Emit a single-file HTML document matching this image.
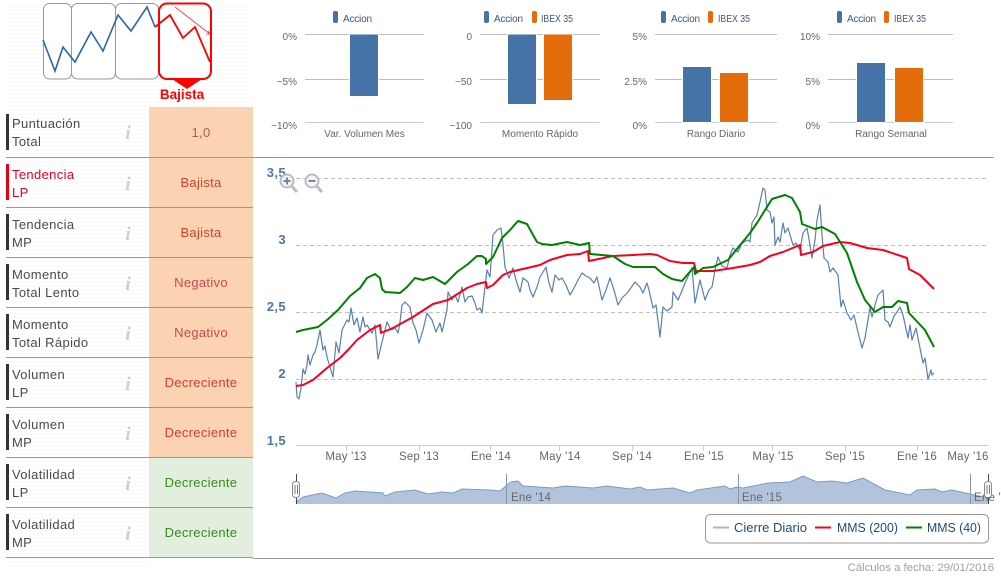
<!DOCTYPE html>
<html lang="es"><head><meta charset="utf-8"><title>Análisis</title>
<style>
html,body{margin:0;padding:0;background:#fff;width:1001px;height:582px;overflow:hidden}
svg{display:block}
text{font-family:"Liberation Sans",sans-serif}
.l{font-size:13px;fill:#444c55;letter-spacing:.35px}
.v{font-size:13px;text-anchor:middle;letter-spacing:.3px}
.r{fill:#c8442e}.g{fill:#3a8a1a}
.i{font-family:"Liberation Serif",serif;font-style:italic;font-weight:bold;font-size:19px;fill:#cfcfcf;text-anchor:middle}
.t{font-size:10px;fill:#666}
.e{text-anchor:end}.m{text-anchor:middle}
.y{font-size:13px;font-weight:bold;fill:#4d75a8;text-anchor:end;letter-spacing:.4px}
.x{font-size:11.5px;fill:#666;text-anchor:middle;letter-spacing:.2px}
.lg{font-size:13px;fill:#274b6d}
</style></head><body>
<svg width="1001" height="582" viewBox="0 0 1001 582" xmlns="http://www.w3.org/2000/svg">
<defs>
<pattern id="d" width="4" height="4" patternUnits="userSpaceOnUse"><rect x="1" y="1" width="2" height="2" fill="#f9f9f9"/></pattern>
<clipPath id="c"><rect x="254" y="470" width="747" height="40"/></clipPath>
</defs>
<rect x="6" y="3" width="244" height="104" fill="url(#d)"/>
<rect x="6" y="107" width="143" height="463" fill="url(#d)"/>

<!-- thumbnail -->
<g fill="#fff" stroke="#999" stroke-width="1">
<rect x="43.5" y="3.5" width="28" height="75.5" rx="6"/>
<rect x="71.5" y="3.5" width="44" height="75.5" rx="6"/>
<rect x="115.5" y="3.5" width="43" height="75.5" rx="6"/>
</g>
<rect x="159" y="3.5" width="52" height="75.5" rx="8" fill="#fff" stroke="#f00" stroke-width="2"/>
<path d="M172 79H202L187 89Z" fill="#f00"/>
<path d="M43 40L55 71L63 47L75 62L91 32L103 51L118 15L131 31L147 7L155 27" fill="none" stroke="#2a66a8" stroke-width="1.6"/>
<path d="M155 27L170 15L183 38L195 27L210 62" fill="none" stroke="#f00" stroke-width="1.8"/>
<path d="M175 7L210 34M210 34L206 34M210 34L208 31" fill="none" stroke="#f33" stroke-width=".8"/>
<text x="182" y="99" class="m" font-weight="bold" fill="#f00" style="font-size:13.5px">Bajista</text>

<!-- coloured cells -->
<rect x="149" y="107" width="104" height="350" fill="#fbd3b2"/>
<rect x="149" y="457" width="104" height="100" fill="#e2efdf"/>

<!-- row separators -->
<g stroke="#999" stroke-width="1">
<path d="M6 157.5H994M6 207.5H253M6 257.5H253M6 307.5H253M6 357.5H253M6 407.5H253M6 457.5H253M6 507.5H253M6 557.5H253M253 558.5H994"/>
</g>

<!-- left bars -->
<g fill="#333">
<rect x="6" y="114" width="3" height="36"/><rect x="6" y="214" width="3" height="36"/><rect x="6" y="264" width="3" height="36"/><rect x="6" y="314" width="3" height="36"/><rect x="6" y="364" width="3" height="36"/><rect x="6" y="414" width="3" height="36"/><rect x="6" y="464" width="3" height="36"/><rect x="6" y="514" width="3" height="36"/>
</g>
<rect x="6" y="164" width="3" height="36" fill="#e60012"/>

<!-- row labels -->
<text x="12" y="128" class="l">Puntuación</text><text x="12" y="146" class="l">Total</text>
<text x="12" y="179" class="l" style="fill:#e3001b">Tendencia</text><text x="12" y="197" class="l" style="fill:#e3001b">LP</text>
<text x="12" y="229" class="l">Tendencia</text><text x="12" y="247" class="l">MP</text>
<text x="12" y="279" class="l">Momento</text><text x="12" y="297" class="l">Total Lento</text>
<text x="12" y="329" class="l">Momento</text><text x="12" y="347" class="l">Total Rápido</text>
<text x="12" y="379" class="l">Volumen</text><text x="12" y="397" class="l">LP</text>
<text x="12" y="429" class="l">Volumen</text><text x="12" y="447" class="l">MP</text>
<text x="12" y="479" class="l">Volatilidad</text><text x="12" y="497" class="l">LP</text>
<text x="12" y="529" class="l">Volatilidad</text><text x="12" y="547" class="l">MP</text>

<g><text x="128" y="139" class="i">i</text><text x="128" y="190" class="i">i</text><text x="128" y="240" class="i">i</text><text x="128" y="290" class="i">i</text><text x="128" y="340" class="i">i</text><text x="128" y="390" class="i">i</text><text x="128" y="440" class="i">i</text><text x="128" y="490" class="i">i</text><text x="128" y="540" class="i">i</text></g>

<text x="201" y="137" class="v r" style="fill:#b85a4e">1,0</text>
<text x="201" y="187" class="v r">Bajista</text>
<text x="201" y="237" class="v r">Bajista</text>
<text x="201" y="287" class="v r" style="fill:#c84a50">Negativo</text>
<text x="201" y="337" class="v r" style="fill:#c84a50">Negativo</text>
<text x="201" y="387" class="v r" style="fill:#d03f2c">Decreciente</text>
<text x="201" y="437" class="v r" style="fill:#d03f2c">Decreciente</text>
<text x="201" y="487" class="v g">Decreciente</text>
<text x="201" y="537" class="v g">Decreciente</text>

<!-- top bar charts -->
<g stroke="#bdbdbd" stroke-width="1">
<path d="M305 34.5H424M305 79.5H424M480 34.5H600M480 79.5H600M655 34.5H777M655 79.5H777M828 34.5H953M828 79.5H953"/>
</g>
<path d="M305 122.5H424M480 122.5H600M655 122.5H777M828 122.5H953" stroke="#c0d0e0"/>
<g fill="#4572a7" stroke="#fff" stroke-width="1">
<rect x="349.5" y="34" width="29" height="62.5"/>
<rect x="507.5" y="34" width="29" height="70.5"/>
<rect x="682.5" y="66.5" width="29" height="56"/>
<rect x="856.5" y="62.5" width="29" height="60"/>
</g>
<g fill="#e46c0a" stroke="#fff" stroke-width="1">
<rect x="543.5" y="34" width="29" height="66.5"/>
<rect x="719.5" y="72.5" width="29" height="50"/>
<rect x="894.5" y="67.5" width="29" height="55"/>
</g>
<g fill="#4572a7">
<rect x="333" y="11" width="5" height="12" rx="2"/><rect x="484" y="11" width="5" height="12" rx="2"/><rect x="661" y="11" width="5" height="12" rx="2"/><rect x="837" y="11" width="5" height="12" rx="2"/>
</g>
<g fill="#e46c0a">
<rect x="532" y="11" width="5" height="12" rx="2"/><rect x="708" y="11" width="5" height="12" rx="2"/><rect x="884" y="11" width="5" height="12" rx="2"/>
</g>
<g>
<text x="343" y="22" class="t" textLength="29" style="fill:#3e576f">Accion</text>
<text x="494" y="22" class="t" textLength="29" style="fill:#3e576f">Accion</text><text x="541" y="22" class="t" textLength="32" lengthAdjust="spacingAndGlyphs" style="fill:#3e576f">IBEX 35</text>
<text x="671" y="22" class="t" textLength="29" style="fill:#3e576f">Accion</text><text x="718" y="22" class="t" textLength="32" lengthAdjust="spacingAndGlyphs" style="fill:#3e576f">IBEX 35</text>
<text x="847" y="22" class="t" textLength="29" style="fill:#3e576f">Accion</text><text x="894" y="22" class="t" textLength="32" lengthAdjust="spacingAndGlyphs" style="fill:#3e576f">IBEX 35</text>
<text x="297" y="40" class="t e">0%</text><text x="297" y="85" class="t e">−5%</text><text x="297" y="129" class="t e">−10%</text>
<text x="472" y="40" class="t e">0</text><text x="472" y="85" class="t e">−50</text><text x="472" y="129" class="t e">−100</text>
<text x="647" y="40" class="t e">5%</text><text x="647" y="85" class="t e">2.5%</text><text x="647" y="129" class="t e">0%</text>
<text x="820" y="40" class="t e">10%</text><text x="820" y="85" class="t e">5%</text><text x="820" y="129" class="t e">0%</text>
<text x="364.5" y="137" class="t m">Var. Volumen Mes</text>
<text x="540" y="137" class="t m">Momento Rápido</text>
<text x="716" y="137" class="t m">Rango Diario</text>
<text x="891" y="137" class="t m">Rango Semanal</text>
</g>

<!-- main chart -->
<path d="M296 178.5H987M296 245.5H987M296 312.5H987M296 379.5H987" stroke="#c0c0c0" stroke-dasharray="4 3" fill="none"/>
<path d="M296 445.5H989M346.5 446V451M419.5 446V451M490.5 446V451M559.5 446V451M632.5 446V451M703.5 446V451M772.5 446V451M845.5 446V451M917.5 446V451" stroke="#c0d0e0" fill="none"/>
<text x="286" y="177" class="y">3,5</text><text x="286" y="244" class="y">3</text><text x="286" y="311" class="y">2,5</text><text x="286" y="378" class="y">2</text><text x="286" y="445" class="y">1,5</text>
<text x="346" y="460" class="x">May '13</text><text x="419" y="460" class="x">Sep '13</text><text x="491" y="460" class="x">Ene '14</text><text x="560" y="460" class="x">May '14</text><text x="632" y="460" class="x">Sep '14</text><text x="704" y="460" class="x">Ene '15</text><text x="773" y="460" class="x">May '15</text><text x="845" y="460" class="x">Sep '15</text><text x="917" y="460" class="x">Ene '16</text><text x="968" y="460" class="x">May '16</text>

<path fill="none" stroke="#4572a7" stroke-width="1.2" opacity=".9" stroke-linejoin="round" d="M296 382L297 397L299 399L301 388L303 369L305 374L307 365L308 355L310 365L313 355L315 352L317 345L320 330L323 350L325 346L327 357L330 367L333 377L336 342L339 353L342 330L347 320L349 322L351 308L354 325L357 318L360 332L363 317L365 327L367 325L372 333L375 325L378 359L382 342L385 330L387 322L391 330L395 328L398 333L400 322L402 305L405 302L410 307L413 323L416 330L419 343L423 330L427 313L432 320L436 332L440 323L442 332L447 310L448 292L452 300L455 295L458 302L462 287L465 302L468 297L472 296L475 303L477 310L480 308L482 313L485 287L487 270L490 277L493 235L497 230L501 228L503 245L505 267L509 278L513 268L516 280L520 292L523 278L528 282L530 290L533 297L537 287L540 277L546 267L549 283L552 292L555 275L559 280L562 278L566 285L570 295L574 288L578 280L582 273L586 276L590 278L594 283L597 277L602 300L606 290L610 278L614 290L618 305L622 298L628 292L635 282L640 287L643 293L647 283L649 290L653 308L656 305L660 337L663 307L667 311L672 307L673 292L678 300L681 293L685 283L692 268L695 303L700 280L705 300L709 290L712 287L715 270L718 257L722 266L727 268L730 255L733 248L738 252L742 243L748 240L750 242L752 223L755 218L757 215L760 202L763 188L765 190L767 210L770 212L772 223L774 217L775 245L778 237L780 242L783 223L785 233L788 228L793 245L796 243L800 250L803 233L807 228L810 245L812 258L815 240L817 220L820 205L822 235L824 258L828 262L830 272L833 268L838 275L841 307L843 300L847 313L851 320L854 315L857 328L860 340L862 348L865 338L868 320L870 307L872 317L875 305L878 295L883 290L885 320L888 322L890 327L894 316L897 312L900 307L903 315L908 338L910 325L912 340L916 328L920 348L923 363L925 358L928 379L931 370L932 375L934 373"/>
<path fill="none" stroke="#f6001e" stroke-width="2" stroke-linejoin="round" d="M296 386L303 385L313 380L327 368L340 358L348 350L357 340L370 330L380 325L381 333L393 328L413 317L433 304L448 300L467 288L477 284L486 282L487 288L493 285L503 275L510 272L540 265L550 260L567 255L580 254L588 251L589 261L613 256L633 255L650 254L657 255L670 261L683 263L694 263L696 271L713 271L733 268L750 265L760 262L770 256L783 252L800 245L801 255L813 252L823 246L840 242L850 243L867 248L883 250L907 258L909 269L920 275L934 289"/>
<path fill="none" stroke="#008000" stroke-width="2" stroke-linejoin="round" d="M296 332L303 330L318 327L327 320L338 310L350 296L360 288L367 278L375 274L380 278L382 289L385 292L400 293L407 287L415 278L423 280L433 277L445 284L457 272L468 264L477 256L482 256L486 259L486 264L493 257L502 238L510 230L518 221L527 224L537 242L542 244L552 245L567 242L580 245L589 243L590 254L613 256L625 264L633 267L655 267L663 274L672 279L682 281L694 267L695 274L703 268L713 267L728 260L750 233L757 223L772 199L785 195L792 198L800 212L802 224L815 229L822 227L835 234L847 253L857 282L865 300L875 312L883 307L892 307L898 301L907 303L909 313L925 330L934 347"/>

<!-- zoom icons -->
<g fill="none" stroke="#bcbcbc">
<circle cx="287" cy="181" r="6.5" stroke-width="2" fill="#f4f4f4"/><path d="M292 186.5L297 192" stroke-width="3"/>
<circle cx="312" cy="181" r="6.5" stroke-width="2" fill="#f4f4f4"/><path d="M317 186.5L322 192" stroke-width="3"/>
<path d="M283.5 181H290.5M287 177.5V184.5M308.5 181H315.5" stroke="#6a8bb0" stroke-width="2"/>
</g>

<!-- navigator -->
<g clip-path="url(#c)">
<path fill="#b2c4dc" stroke="none" d="M296 504V502L303 497L322 493L336 498L345 493L355 491L383 493L385 496L395 492L415 490L428 494L442 492L453 493L462 489L490 490L500 491L507 485L511 482L518 481L523 486L553 488L565 486L593 488L607 486L630 489L640 487L647 490L673 488L690 493L697 490L725 486L730 489L737 487L743 488L768 483L790 482L803 476L817 482L832 481L847 483L863 478L885 490L910 495L917 490L935 489L942 492L952 490L970 494L988 498V504Z"/>
<path fill="none" stroke="#7d9ac0" d="M296 502L303 497L322 493L336 498L345 493L355 491L383 493L385 496L395 492L415 490L428 494L442 492L453 493L462 489L490 490L500 491L507 485L511 482L518 481L523 486L553 488L565 486L593 488L607 486L630 489L640 487L647 490L673 488L690 493L697 490L725 486L730 489L737 487L743 488L768 483L790 482L803 476L817 482L832 481L847 483L863 478L885 490L910 495L917 490L935 489L942 492L952 490L970 494L988 498"/>
<path d="M506.5 474V504M738.5 474V504M970.5 474V504" stroke="#8a97a8"/>
<text x="511" y="501" class="x" style="text-anchor:start;fill:#666;font-size:11.5px">Ene '14</text>
<text x="742" y="501" class="x" style="text-anchor:start;fill:#666;font-size:11.5px">Ene '15</text>
<text x="974" y="501" class="x" style="text-anchor:start;fill:#666;font-size:11.5px">Ene '16</text>
</g>
<g fill="#fff" stroke="#555" stroke-width="1">
<path d="M296.5 474V504M988.5 474V504" stroke="#444"/>
<rect x="292.5" y="481.5" width="7" height="16" rx="3" stroke="#888"/>
<rect x="984.5" y="481.5" width="7" height="16" rx="3" stroke="#888"/>
<path d="M295 485V494M297.5 485V494M987 485V494M989.5 485V494" stroke="#777" fill="none"/>
</g>

<!-- legend -->
<rect x="705.5" y="514.5" width="283" height="28.5" rx="5" fill="#fff" stroke="#999"/>
<path d="M713 527.5H729" stroke="#a2b8d4" stroke-width="2"/>
<path d="M815 527.5H831" stroke="#f6001e" stroke-width="2"/>
<path d="M906 527.5H922" stroke="#008000" stroke-width="2"/>
<text x="734" y="532" class="lg" textLength="73">Cierre Diario</text>
<text x="837" y="532" class="lg" textLength="61" lengthAdjust="spacingAndGlyphs">MMS (200)</text>
<text x="927" y="532" class="lg" textLength="54" lengthAdjust="spacingAndGlyphs">MMS (40)</text>

<text x="994" y="571" class="e" style="font-size:11.3px;fill:#a0a0a0">Cálculos a fecha: 29/01/2016</text>
</svg>
</body></html>
